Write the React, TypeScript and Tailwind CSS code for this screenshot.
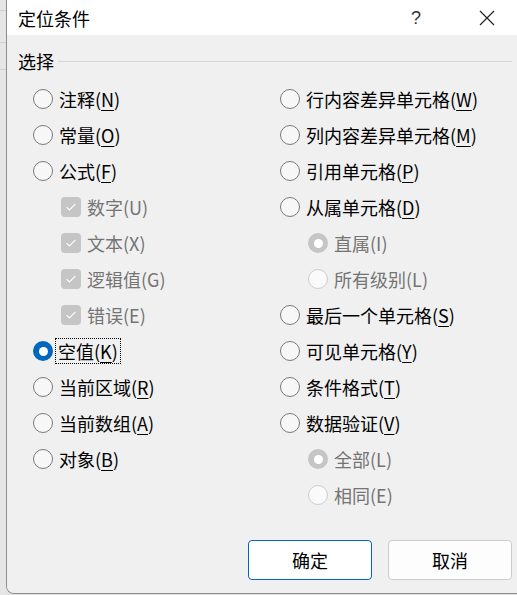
import React from 'react'

type Item = {
  label: string
  key: string
  kind: 'radio' | 'check' | 'subradio'
  checked?: boolean
  disabled?: boolean
  focus?: boolean
}

const left: Item[] = [
  { label: '注释', key: 'N', kind: 'radio' },
  { label: '常量', key: 'O', kind: 'radio' },
  { label: '公式', key: 'F', kind: 'radio' },
  { label: '数字', key: 'U', kind: 'check', checked: true, disabled: true },
  { label: '文本', key: 'X', kind: 'check', checked: true, disabled: true },
  { label: '逻辑值', key: 'G', kind: 'check', checked: true, disabled: true },
  { label: '错误', key: 'E', kind: 'check', checked: true, disabled: true },
  { label: '空值', key: 'K', kind: 'radio', checked: true, focus: true },
  { label: '当前区域', key: 'R', kind: 'radio' },
  { label: '当前数组', key: 'A', kind: 'radio' },
  { label: '对象', key: 'B', kind: 'radio' },
]

const right: Item[] = [
  { label: '行内容差异单元格', key: 'W', kind: 'radio' },
  { label: '列内容差异单元格', key: 'M', kind: 'radio' },
  { label: '引用单元格', key: 'P', kind: 'radio' },
  { label: '从属单元格', key: 'D', kind: 'radio' },
  { label: '直属', key: 'I', kind: 'subradio', checked: true, disabled: true },
  { label: '所有级别', key: 'L', kind: 'subradio', disabled: true },
  { label: '最后一个单元格', key: 'S', kind: 'radio' },
  { label: '可见单元格', key: 'Y', kind: 'radio' },
  { label: '条件格式', key: 'T', kind: 'radio' },
  { label: '数据验证', key: 'V', kind: 'radio' },
  { label: '全部', key: 'L', kind: 'subradio', checked: true, disabled: true },
  { label: '相同', key: 'E', kind: 'subradio', disabled: true },
]

function Radio({ checked, disabled }: { checked?: boolean; disabled?: boolean }) {
  if (checked && disabled) {
    return (
      <span className="w-[20px] h-[20px] rounded-full bg-[#c5c5c5] flex items-center justify-center shrink-0">
        <span className="w-[9px] h-[9px] rounded-full bg-white" />
      </span>
    )
  }
  if (checked) {
    return (
      <span className="w-[20px] h-[20px] rounded-full bg-[#0067c0] flex items-center justify-center shrink-0">
        <span className="w-[9px] h-[9px] rounded-full bg-white" />
      </span>
    )
  }
  if (disabled) {
    return <span className="w-[20px] h-[20px] rounded-full border border-[#cdcdcd] bg-[#fafafa] shrink-0" />
  }
  return <span className="w-[20px] h-[20px] rounded-full border border-[#7a7a7a] bg-[#f7f7f7] shrink-0" />
}

function Check() {
  return (
    <span className="w-[20px] h-[20px] rounded-[4px] bg-[#c5c5c5] flex items-center justify-center shrink-0">
      <svg width="12" height="10" viewBox="0 0 12 10" fill="none">
        <path d="M1.5 5.2 L4.4 8 L10.5 1.8" stroke="#ffffff" strokeWidth="1.1" />
      </svg>
    </span>
  )
}

function Row({ item }: { item: Item }) {
  const sub = item.kind !== 'radio'
  return (
    <div className={`h-[36px] flex items-center gap-[6px] ${sub ? 'pl-[28px]' : ''}`}>
      {item.kind === 'check' ? <Check /> : <Radio checked={item.checked} disabled={item.disabled} />}
      <span
        className={`text-[18px] leading-[24px] whitespace-nowrap ${
          item.disabled ? 'text-[#747474]' : 'text-black'
        } ${item.focus ? 'outline outline-1 outline-dotted outline-black px-[2px] -ml-[3px]' : ''}`}
      >
        {item.label}(
        {item.disabled ? item.key : <span className="underline underline-offset-[3px]">{item.key}</span>})
      </span>
    </div>
  )
}

export default function App() {
  return (
    <div className="w-[517px] h-[595px] flex bg-[#e3e3e3] overflow-hidden font-['Noto_Sans_CJK_SC','Microsoft_YaHei',sans-serif]">
      {/* sheet strip behind the dialog */}
      <div className="w-[6px] flex flex-col bg-[#e6e6e6]">
        <div className="h-[11px] border-b border-[#cfcfcf]" />
        <div className="h-[32px] border-b border-[#cfcfcf]" />
        <div className="h-[27px] border-b border-[#cfcfcf]" />
      </div>

      <div className="flex-1 h-[594px] flex flex-col border-l border-b border-[#8c8c8c] rounded-bl-[8px] overflow-hidden">
        {/* title bar */}
        <div className="h-[35px] bg-white flex items-center pl-[11px] shrink-0">
          <span className="text-[18px] text-black leading-none">定位条件</span>
          <span className="ml-auto text-[18px] text-[#333] leading-none mr-[58px] font-['Liberation_Sans',sans-serif]">?</span>
          <svg width="16" height="16" viewBox="0 0 16 16" className="mr-[22px]">
            <path d="M1 1 L15 15 M15 1 L1 15" stroke="#222" strokeWidth="1.2" />
          </svg>
        </div>

        {/* body */}
        <div className="flex-1 bg-[#f0f0f0] flex flex-col pt-[46px] relative">
          <div className="absolute left-[11px] right-[5px] top-[14px] h-[24px] flex items-center gap-[4px]">
            <span className="text-[18px] text-black leading-none">选择</span>
            <div className="flex-1 h-px bg-[#d6d6d6]" />
          </div>
          <div className="flex pl-[26px]">
            <div className="w-[247px] flex flex-col">
              {left.map((it, i) => (
                <Row key={i} item={it} />
              ))}
            </div>
            <div className="flex-1 flex flex-col">
              {right.map((it, i) => (
                <Row key={i} item={it} />
              ))}
            </div>
          </div>

          <div className="flex justify-end gap-[16px] pr-[5px] mt-[27px]">
            <button className="w-[124px] h-[40px] rounded-[4px] border border-[#0067c0] bg-white text-[18px] text-black">
              确定
            </button>
            <button className="w-[124px] h-[40px] rounded-[4px] border border-[#cccccc] bg-[#fdfdfd] text-[18px] text-black">
              取消
            </button>
          </div>
        </div>
      </div>
    </div>
  )
}
